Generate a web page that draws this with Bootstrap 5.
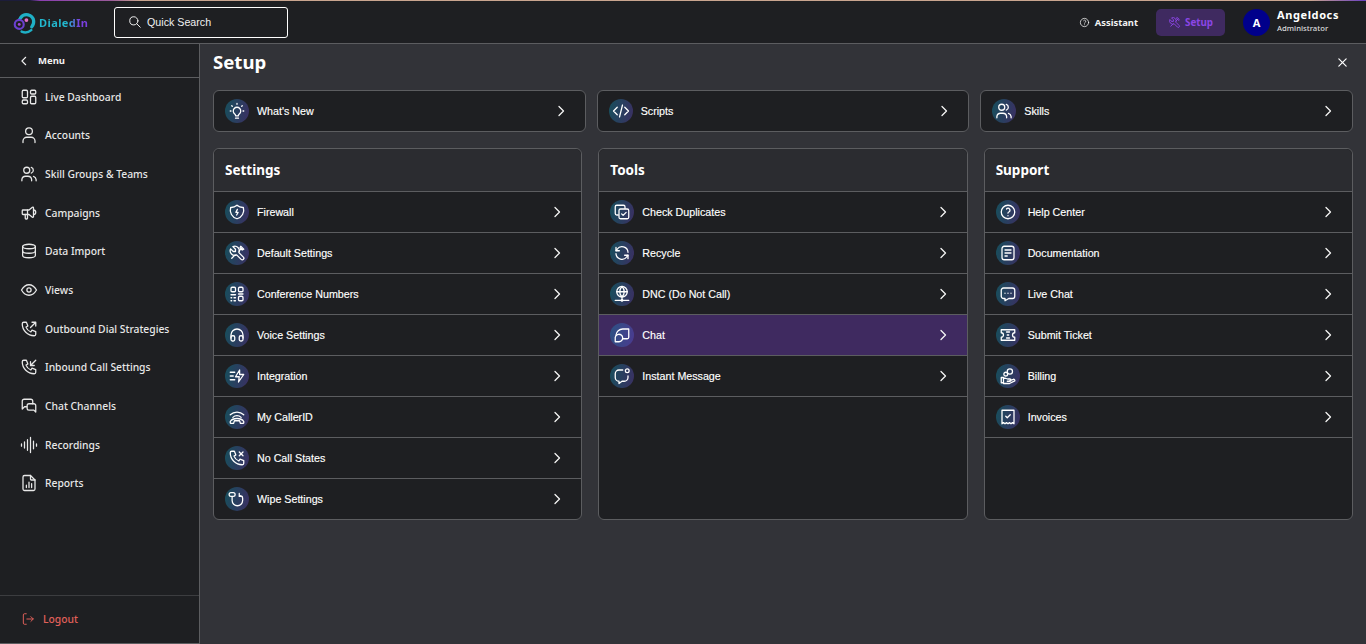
<!DOCTYPE html>
<html lang="en">
<head>
    <meta charset="UTF-8">
    <meta name="viewport" content="width=device-width, initial-scale=1.0">
    <title>DialedIn - Setup</title>
    <link href="https://cdn.jsdelivr.net/npm/bootstrap@5.3.0/dist/css/bootstrap.min.css" rel="stylesheet">
    <style>
        html, body { height: 100%; }
        body {
            background: #323338;
            color: #fff;
            font-family: "Liberation Sans", Arial, sans-serif;
            font-size: 10.7px;
            overflow: hidden;
        }
        svg.ic { fill: none; stroke: currentColor; stroke-width: 1.7; stroke-linecap: round; stroke-linejoin: round; flex: none; }
        svg.ic.di-thin { stroke-width: 1.3; }
        .di-shell { height: 100vh; }
        .di-topbar {
            height: 44px;
            flex: none;
            background: #1e1f22;
            border-bottom: 1px solid #5c5d60;
            position: relative;
            padding: 1px 0 0 13px;
        }
        .di-topbar::before {
            content: "";
            position: absolute;
            left: 0; right: 0; top: 0;
            height: 1px;
            background: linear-gradient(90deg, #1c1c3a 0, #1c1c3a 30px, #8a3fb0 40px, #9a5a9a 110px, #c9a58f 140px, #c9a58f 1310px, #6a3fc0 1366px);
        }
        .di-logo { width: 101px; gap: 3px; }
        .di-logo-text {
            font: 700 11px "Noto Sans", sans-serif;
            letter-spacing: .4px;
            background: linear-gradient(90deg, #22b8cf 0, #22b8cf 58%, #7b3fe0 82%);
            -webkit-background-clip: text;
            background-clip: text;
            color: transparent;
        }
        .di-search {
            width: 174px;
            height: 31px;
            border: 1px solid #fff;
            border-radius: 3px;
            padding-left: 13px;
            gap: 5px;
            color: #f0f0f0;
        }
        .di-assist { font: 700 9.4px "Noto Sans", sans-serif; gap: 5px; margin-right: 18px; color: #f2f2f2; }
        .di-setup-btn {
            width: 69px;
            height: 27px;
            background: #3f2a60;
            border-radius: 5px;
            color: #8b46e6;
            font: 700 9.8px "Noto Sans", sans-serif;
            gap: 4px;
            margin-right: 18px;
        }
        .di-avatar {
            width: 27px; height: 27px;
            border-radius: 50%;
            background: #00008b;
            font: 700 11px "Noto Sans", sans-serif;
        }
        .di-user { margin: -4px 27px 0 7px; line-height: 1; }
        .di-user-name { font: 700 11px "Noto Sans", sans-serif; letter-spacing: .6px; margin-bottom: 1px; }
        .di-user-role { font: 500 7.7px "Noto Sans", sans-serif; color: #dcdcdc; }
        .di-side {
            width: 200px;
            flex: none;
            background: #1e1f22;
            border-right: 1px solid #5c5d60;
            border-bottom: 1px solid #5c5d60;
        }
        .di-menu-head {
            height: 34px;
            border-bottom: 1px solid #5c5d60;
            padding-left: 19px;
            gap: 9px;
            font: 700 9.5px "Noto Sans", sans-serif;
            color: #f2f2f2;
        }
        .di-nav-link {
            height: 38.65px;
            padding: 0 0 1px 20px;
            gap: 7px;
            color: #e8e8e8;
            font: 500 10.3px "Noto Sans", sans-serif;
            text-decoration: none;
        }
        .di-logout {
            height: 48px;
            border-top: 1px solid #3c3d40;
            padding: 0 0 2px 21px;
            gap: 8px;
            color: #e0605a;
            font: 500 10.3px "Noto Sans", sans-serif;
        }
        .di-main { padding: 8px 13px 0 13px; min-width: 0; }
        .di-title { font: 700 18.6px/1 "Noto Sans", sans-serif; margin: 0; }
        .di-title-row { height: 20px; margin-bottom: 18px; }
        .di-close { color: #fff; margin-right: 5px; }
        .di-quick { display: grid; grid-template-columns: repeat(3, 1fr); gap: 11px; margin-bottom: 16px; }
        .di-panels { display: grid; grid-template-columns: repeat(3, 1fr); gap: 16px; }
        .di-card {
            background: #1e1f22;
            border: 1px solid #5c5d60;
            border-radius: 6px;
            color: #fff;
            overflow: hidden;
        }
        .di-card .card-header {
            height: 43px;
            background: #2b2c30;
            border-bottom: 1px solid #5c5d60;
            border-radius: 6px 6px 0 0;
            font: 700 13.5px "Noto Sans", sans-serif;
            padding: 0 11px;
            display: flex;
            align-items: center;
        }
        .di-list { height: 327px; background: transparent; }
        .di-row {
            height: 41px;
            background: transparent;
            color: #fff;
            border: 0;
            border-bottom: 1px solid #5c5d60;
            padding: 0 18px 0 11px;
            gap: 8px;
            display: flex;
            align-items: center;
            font-size: 10.7px;
            text-decoration: none;
            -webkit-text-stroke: .15px #fff;
        }
        .di-list .di-row { border-radius: 0; }
        .di-list .di-row:last-child { height: 40px; border-bottom: 0; }
        .di-list .di-row.di-fill { height: 41px; border-bottom: 1px solid #5c5d60; }
        .di-list .di-row.active { margin-top: 0; border-top-width: 0; background: #3f2a60; color: #fff; border-color: #5c5d60; }
        .di-quick .di-row { height: 40px; border: 0; background: transparent; }
        .di-bubble {
            width: 24px; height: 24px;
            border-radius: 50%;
            background: linear-gradient(100deg, #174f5c, #3b2f63);
            display: flex;
            align-items: center;
            justify-content: center;
            flex: none;
            color: #fff;
        }
        .active .di-bubble { background: linear-gradient(100deg, #2c5282, #4b3a90); }
        .di-chev { margin-left: auto; color: #f4f4f4; }
    </style>
</head>
<body>
<svg width="0" height="0" class="position-absolute">
    <symbol id="i-chev" viewBox="0 0 12 12"><path d="M4 1.5 8.5 6 4 10.5"/></symbol>
    <symbol id="i-back" viewBox="0 0 12 12"><path d="M8 1.5 3.5 6 8 10.5"/></symbol>
    <symbol id="i-search" viewBox="0 0 24 24"><circle cx="10" cy="10" r="7"/><path d="m21 21-6-6"/></symbol>
    <symbol id="i-help" viewBox="0 0 24 24"><circle cx="12" cy="12" r="9"/><path d="M12 17v.01M12 13.500a1.500 1.500 0 0 1 1-1.500 2.600 2.600 0 1 0-3-4"/></symbol>
    <symbol id="i-tools" viewBox="0 0 24 24"><path d="M7 10h3V7L6.500 3.500a6 6 0 0 1 8 8l6 6a2 2 0 0 1-3 3l-6-6a6 6 0 0 1-8-8L7 10"/><path d="M14.500 9.500 19 5M17 3l4 4-2 1-3-3zM9.500 14.500 5 19a1.400 1.400 0 0 0 0 0"/></symbol>
    <symbol id="i-dash" viewBox="0 0 24 24"><rect x="3" y="3" width="7" height="10" rx="1.500"/><rect x="14" y="3" width="7" height="5" rx="1.500"/><rect x="3" y="16" width="7" height="5" rx="1.500"/><rect x="14" y="11" width="7" height="10" rx="1.500"/></symbol>
    <symbol id="i-user" viewBox="0 0 24 24"><circle cx="12" cy="7" r="4.500"/><path d="M4 22v-2a5 5 0 0 1 5-5h6a5 5 0 0 1 5 5v2"/></symbol>
    <symbol id="i-users" viewBox="0 0 24 24"><circle cx="9" cy="7" r="4"/><path d="M2.500 21v-1.500a5 5 0 0 1 5-4.500h3a5 5 0 0 1 5 4.500V21"/><path d="M15 3.200a4 4 0 0 1 0 7.600M18 15.200a5 5 0 0 1 3.500 4.300V21"/></symbol>
    <symbol id="i-camp" viewBox="0 0 24 24"><path d="M18 8a3 3 0 0 1 0 6M10 8v11a1 1 0 0 1-1 1H8a1 1 0 0 1-1-1v-5"/><path d="M12 8 16.500 4.300A1 1 0 0 1 18 5v12a1 1 0 0 1-1.500.700L12 14H4a1 1 0 0 1-1-1V9a1 1 0 0 1 1-1h8"/></symbol>
    <symbol id="i-db" viewBox="0 0 24 24"><ellipse cx="12" cy="6" rx="8.500" ry="3"/><path d="M3.500 6v12c0 1.700 3.800 3 8.500 3s8.500-1.300 8.500-3V6"/><path d="M3.500 12c0 1.700 3.800 3 8.500 3s8.500-1.300 8.500-3"/></symbol>
    <symbol id="i-eye" viewBox="0 0 24 24"><circle cx="12" cy="12" r="2.800"/><path d="M22 12c-2.700 4.700-6 7-10 7s-7.300-2.300-10-7c2.700-4.700 6-7 10-7s7.300 2.300 10 7"/></symbol>
    <symbol id="i-out" viewBox="0 0 24 24"><path d="M5 3h3.500l2 5-2.500 1.500a11 11 0 0 0 6.500 6.500l1.500-2.500 5 2v3.500a2 2 0 0 1-2 2A16 16 0 0 1 3 5a2 2 0 0 1 2-2"/><path d="M14 10l7-7M16 3h5v5"/></symbol>
    <symbol id="i-in" viewBox="0 0 24 24"><path d="M5 3h3.500l2 5-2.500 1.500a11 11 0 0 0 6.500 6.500l1.500-2.500 5 2v3.500a2 2 0 0 1-2 2A16 16 0 0 1 3 5a2 2 0 0 1 2-2"/><path d="M21 3l-7 7M14 5v5h5"/></symbol>
    <symbol id="i-chats" viewBox="0 0 24 24"><path d="M17 9V5.500A2.500 2.500 0 0 0 14.500 3h-9A2.500 2.500 0 0 0 3 5.500V16l3-3h3"/><path d="M21 20l-2.500-2.500H12A2.500 2.500 0 0 1 9.500 15v-3.500A2.500 2.500 0 0 1 12 9h6.500a2.500 2.500 0 0 1 2.500 2.500z"/></symbol>
    <symbol id="i-wave" viewBox="0 0 24 24"><path d="M2 10.500v3M6 8v8M10 5v14M14 2v20M18 7v10M22 10.500v3"/></symbol>
    <symbol id="i-report" viewBox="0 0 24 24"><path d="M14 2v5a1 1 0 0 0 1 1h5"/><path d="M6 22a2 2 0 0 1-2-2V4a2 2 0 0 1 2-2h8l6 6v12a2 2 0 0 1-2 2z"/><path d="M8.500 18v-3M12 18v-7M15.500 18v-5"/></symbol>
    <symbol id="i-logout" viewBox="0 0 24 24"><path d="M9 3H6a2 2 0 0 0-2 2v14a2 2 0 0 0 2 2h3M10 12h11M17 8l4 4-4 4"/></symbol>
    <symbol id="i-x" viewBox="0 0 12 12"><path d="M2 2l8 8M10 2l-8 8"/></symbol>
    <symbol id="i-bulb" viewBox="0 0 24 24"><path d="M3 12h1M12 2v1M5 5l.7.7M19 5l-.7.7M21 12h-1"/><path d="M9 16a5 5 0 1 1 6 0c-.8.700-1.200 1.500-1.300 2.500h-3.400c-.1-1-.5-1.800-1.300-2.500M10 21.500h4"/></symbol>
    <symbol id="i-code" viewBox="0 0 24 24"><path d="M7 7l-5 5 5 5M17 7l5 5-5 5M14 4l-4 16"/></symbol>
    <symbol id="i-shield" viewBox="0 0 24 24"><path d="M12 3a12 12 0 0 0 8.500 3A12 12 0 0 1 12 21 12 12 0 0 1 3.500 6 12 12 0 0 0 12 3"/><path d="M12.500 8.500 10.500 12.500h3l-2 3.500"/></symbol>
    <symbol id="i-qr" viewBox="0 0 24 24"><rect x="4" y="3" width="6" height="6" rx="1.500"/><rect x="14" y="3" width="6" height="6" rx="1.500"/><rect x="14" y="15" width="6" height="6" rx="1.500"/><path d="M4 13h6M4 17h1M8 17h2M4 21h1M8 21h2M14 12h6"/></symbol>
    <symbol id="i-head" viewBox="0 0 24 24"><rect x="4" y="13" width="5" height="7" rx="2"/><rect x="15" y="13" width="5" height="7" rx="2"/><path d="M4 16v-4a8 8 0 0 1 16 0v4"/></symbol>
    <symbol id="i-integ" viewBox="0 0 24 24"><path d="M3 7h6M3 12h4M3 17h6"/><path d="M15.500 4 10 13h5l-1 7 7-10h-5.500z"/></symbol>
    <symbol id="i-caller" viewBox="0 0 24 24"><path d="M3 9a13 13 0 0 1 18 0M6.500 12.500a8 8 0 0 1 11 0"/><path d="M3 19.500v-1.500c2-3 5.500-4 9-4s7 1 9 4v1.500a1 1 0 0 1-1 1h-3.500l-1-3.500h-7l-1 3.500H4a1 1 0 0 1-1-1"/></symbol>
    <symbol id="i-phonex" viewBox="0 0 24 24"><path d="M5 3h3.500l2 5-2.500 1.500a11 11 0 0 0 6.500 6.500l1.500-2.500 5 2v3.500a2 2 0 0 1-2 2A16 16 0 0 1 3 5a2 2 0 0 1 2-2"/><path d="M15 4l5 5M20 4l-5 5"/></symbol>
    <symbol id="i-wipe" viewBox="0 0 24 24"><path d="M4 3.500a2.500 2.500 0 0 0 0 5h3a2.500 2.500 0 0 0 0-5zM5.500 8.500V14a7 7 0 0 0 14 0v-3a3.500 3.500 0 0 0-4-3.500M15 4.500v4h4"/></symbol>
    <symbol id="i-dup" viewBox="0 0 24 24"><path d="M16 7V5a2 2 0 0 0-2-2H5a2 2 0 0 0-2 2v9a2 2 0 0 0 2 2h2"/><rect x="8" y="8" width="13" height="13" rx="2"/><path d="M11.500 14.500l2 2 4-4"/></symbol>
    <symbol id="i-recycle" viewBox="0 0 24 24"><path d="M20 11A8 8 0 0 0 5.500 7L4 9M4 13a8 8 0 0 0 14.500 4l1.500-2"/><path d="M4 4.500V9h4.500M20 19.500V15h-4.500"/></symbol>
    <symbol id="i-dnc" viewBox="0 0 24 24"><circle cx="12" cy="9" r="7"/><path d="M5 9h14M12 2c-4 4-4 10 0 14M12 2c4 4 4 10 0 14M12 16v4M3 20.500h18"/><circle cx="12" cy="20.500" r="1"/></symbol>
    <symbol id="i-chat" viewBox="0 0 24 24"><path d="M21 4H13a9 9 0 0 0-9 8M21 4v11a2 2 0 0 1-2 2h-6"/><path d="M3 21v-4a5 5 0 1 1 5 4z"/></symbol>
    <symbol id="i-im" viewBox="0 0 24 24"><path d="M13 4H8a5 5 0 0 0-5 5v5a5 5 0 0 0 5 5v3l4-3h3a5 5 0 0 0 5-5v-2"/><circle cx="19" cy="5" r="2.500"/></symbol>
    <symbol id="i-doc" viewBox="0 0 24 24"><rect x="4" y="3" width="16" height="18" rx="3"/><path d="M8 8h8M8 12h8M8 16h3"/></symbol>
    <symbol id="i-live" viewBox="0 0 24 24"><path d="M3 7a3 3 0 0 1 3-3h12a3 3 0 0 1 3 3v8a3 3 0 0 1-3 3h-5l-5 3v-3H6a3 3 0 0 1-3-3z"/><path d="M8 11h.01M12 11h.01M16 11h.01"/></symbol>
    <symbol id="i-ticket" viewBox="0 0 24 24"><path d="M3 5h18v4a3 3 0 0 0 0 6v4H3v-4a3 3 0 0 0 0-6z"/><path d="M14 8h-4M14 16h-4M13 12h-2"/></symbol>
    <symbol id="i-bill" viewBox="0 0 24 24"><circle cx="14.500" cy="6" r="3.500"/><circle cx="9" cy="9.500" r="2.500"/><path d="M3 14h3v7H3zM6 15h2.500l3 1h3a1.500 1.500 0 0 1 0 3H11M14 18.500l5-2a1.500 1.500 0 0 1 2 2L14 22H6"/></symbol>
    <symbol id="i-inv" viewBox="0 0 24 24"><path d="M4 3h16v18l-2-1.500-2 1.500-2-1.500-2 1.500-2-1.500-2 1.500-2-1.500L4 21z"/><path d="M9 11l2 2 4-4"/></symbol>
</svg>

<div class="di-shell d-flex flex-column">
    <header class="di-topbar d-flex align-items-center">
        <div class="di-logo d-flex align-items-center">
            <svg width="23" height="23" viewBox="0 0 24 24" fill="none">
                <path d="M8 7a7.500 7.500 0 0 1 13.500 3c.5 3-.5 5-2 6.500" stroke="#1fb0c6" stroke-width="3.400" stroke-linecap="round"/>
                <path d="M8 7c-1 1-1.500 2-1.500 2" stroke="#1fb0c6" stroke-width="3"/>
                <circle cx="6.500" cy="14" r="4.700" stroke="#6a3fd0" stroke-width="2.200"/>
                <circle cx="6.500" cy="14" r="1.500" fill="#a04ad8"/>
                <circle cx="14" cy="9.500" r="2" fill="#e070c8"/>
                <path d="M9 21.500c3 1.200 7 1 10-1.500" stroke="#1fb0c6" stroke-width="2.600" stroke-linecap="round"/>
            </svg>
            <span class="di-logo-text">DialedIn</span>
        </div>
        <div class="di-search d-flex align-items-center">
            <svg class="ic" width="14" height="14"><use href="#i-search"/></svg>
            <span>Quick Search</span>
        </div>
        <div class="ms-auto d-flex align-items-center">
            <div class="di-assist d-flex align-items-center">
                <svg class="ic" width="11" height="11"><use href="#i-help"/></svg>
                <span>Assistant</span>
            </div>
            <div class="di-setup-btn d-flex align-items-center justify-content-center">
                <svg class="ic" width="13" height="13"><use href="#i-tools"/></svg>
                <span>Setup</span>
            </div>
            <div class="di-avatar d-flex align-items-center justify-content-center">A</div>
            <div class="di-user">
                <div class="di-user-name">Angeldocs</div>
                <div class="di-user-role">Administrator</div>
            </div>
        </div>
    </header>

    <div class="d-flex flex-grow-1" style="min-height:0">
        <aside class="di-side d-flex flex-column">
            <div class="di-menu-head d-flex align-items-center">
                <svg class="ic di-thin" width="10" height="10"><use href="#i-back"/></svg>
                <span>Menu</span>
            </div>
            <nav class="flex-grow-1 d-flex flex-column">
                <a class="di-nav-link d-flex align-items-center" href="#"><svg class="ic" width="18" height="18"><use href="#i-dash"/></svg><span>Live Dashboard</span></a>
                <a class="di-nav-link d-flex align-items-center" href="#"><svg class="ic" width="18" height="18"><use href="#i-user"/></svg><span>Accounts</span></a>
                <a class="di-nav-link d-flex align-items-center" href="#"><svg class="ic" width="18" height="18"><use href="#i-users"/></svg><span>Skill Groups &amp; Teams</span></a>
                <a class="di-nav-link d-flex align-items-center" href="#"><svg class="ic" width="18" height="18"><use href="#i-camp"/></svg><span>Campaigns</span></a>
                <a class="di-nav-link d-flex align-items-center" href="#"><svg class="ic" width="18" height="18"><use href="#i-db"/></svg><span>Data Import</span></a>
                <a class="di-nav-link d-flex align-items-center" href="#"><svg class="ic" width="18" height="18"><use href="#i-eye"/></svg><span>Views</span></a>
                <a class="di-nav-link d-flex align-items-center" href="#"><svg class="ic" width="18" height="18"><use href="#i-out"/></svg><span>Outbound Dial Strategies</span></a>
                <a class="di-nav-link d-flex align-items-center" href="#"><svg class="ic" width="18" height="18"><use href="#i-in"/></svg><span>Inbound Call Settings</span></a>
                <a class="di-nav-link d-flex align-items-center" href="#"><svg class="ic" width="18" height="18"><use href="#i-chats"/></svg><span>Chat Channels</span></a>
                <a class="di-nav-link d-flex align-items-center" href="#"><svg class="ic" width="18" height="18"><use href="#i-wave"/></svg><span>Recordings</span></a>
                <a class="di-nav-link d-flex align-items-center" href="#"><svg class="ic" width="18" height="18"><use href="#i-report"/></svg><span>Reports</span></a>
            </nav>
            <div class="di-logout d-flex align-items-center">
                <svg class="ic" width="14" height="14"><use href="#i-logout"/></svg>
                <span>Logout</span>
            </div>
        </aside>

        <main class="di-main flex-grow-1">
            <div class="di-title-row d-flex align-items-center justify-content-between">
                <h1 class="di-title">Setup</h1>
                <svg class="ic di-thin di-close" width="11" height="11"><use href="#i-x"/></svg>
            </div>

            <div class="di-quick">
                <div class="card di-card"><a href="#" class="di-row"><span class="di-bubble"><svg class="ic" width="18" height="18"><use href="#i-bulb"/></svg></span>What's New<svg class="ic di-thin di-chev" width="12" height="12"><use href="#i-chev"/></svg></a></div>
                <div class="card di-card"><a href="#" class="di-row"><span class="di-bubble"><svg class="ic" width="18" height="18"><use href="#i-code"/></svg></span>Scripts<svg class="ic di-thin di-chev" width="12" height="12"><use href="#i-chev"/></svg></a></div>
                <div class="card di-card"><a href="#" class="di-row"><span class="di-bubble"><svg class="ic" width="18" height="18"><use href="#i-users"/></svg></span>Skills<svg class="ic di-thin di-chev" width="12" height="12"><use href="#i-chev"/></svg></a></div>
            </div>

            <div class="di-panels">
                <div class="card di-card">
                    <div class="card-header">Settings</div>
                    <div class="list-group list-group-flush di-list">
                        <a href="#" class="list-group-item di-row"><span class="di-bubble"><svg class="ic" width="18" height="18"><use href="#i-shield"/></svg></span>Firewall<svg class="ic di-thin di-chev" width="12" height="12"><use href="#i-chev"/></svg></a>
                        <a href="#" class="list-group-item di-row"><span class="di-bubble"><svg class="ic" width="18" height="18"><use href="#i-tools"/></svg></span>Default Settings<svg class="ic di-thin di-chev" width="12" height="12"><use href="#i-chev"/></svg></a>
                        <a href="#" class="list-group-item di-row"><span class="di-bubble"><svg class="ic" width="18" height="18"><use href="#i-qr"/></svg></span>Conference Numbers<svg class="ic di-thin di-chev" width="12" height="12"><use href="#i-chev"/></svg></a>
                        <a href="#" class="list-group-item di-row"><span class="di-bubble"><svg class="ic" width="18" height="18"><use href="#i-head"/></svg></span>Voice Settings<svg class="ic di-thin di-chev" width="12" height="12"><use href="#i-chev"/></svg></a>
                        <a href="#" class="list-group-item di-row"><span class="di-bubble"><svg class="ic" width="18" height="18"><use href="#i-integ"/></svg></span>Integration<svg class="ic di-thin di-chev" width="12" height="12"><use href="#i-chev"/></svg></a>
                        <a href="#" class="list-group-item di-row"><span class="di-bubble"><svg class="ic" width="18" height="18"><use href="#i-caller"/></svg></span>My CallerID<svg class="ic di-thin di-chev" width="12" height="12"><use href="#i-chev"/></svg></a>
                        <a href="#" class="list-group-item di-row"><span class="di-bubble"><svg class="ic" width="18" height="18"><use href="#i-phonex"/></svg></span>No Call States<svg class="ic di-thin di-chev" width="12" height="12"><use href="#i-chev"/></svg></a>
                        <a href="#" class="list-group-item di-row"><span class="di-bubble"><svg class="ic" width="18" height="18"><use href="#i-wipe"/></svg></span>Wipe Settings<svg class="ic di-thin di-chev" width="12" height="12"><use href="#i-chev"/></svg></a>
                    </div>
                </div>
                <div class="card di-card">
                    <div class="card-header">Tools</div>
                    <div class="list-group list-group-flush di-list">
                        <a href="#" class="list-group-item di-row"><span class="di-bubble"><svg class="ic" width="18" height="18"><use href="#i-dup"/></svg></span>Check Duplicates<svg class="ic di-thin di-chev" width="12" height="12"><use href="#i-chev"/></svg></a>
                        <a href="#" class="list-group-item di-row"><span class="di-bubble"><svg class="ic" width="18" height="18"><use href="#i-recycle"/></svg></span>Recycle<svg class="ic di-thin di-chev" width="12" height="12"><use href="#i-chev"/></svg></a>
                        <a href="#" class="list-group-item di-row"><span class="di-bubble"><svg class="ic" width="18" height="18"><use href="#i-dnc"/></svg></span>DNC (Do Not Call)<svg class="ic di-thin di-chev" width="12" height="12"><use href="#i-chev"/></svg></a>
                        <a href="#" class="list-group-item di-row active"><span class="di-bubble"><svg class="ic" width="18" height="18"><use href="#i-chat"/></svg></span>Chat<svg class="ic di-thin di-chev" width="12" height="12"><use href="#i-chev"/></svg></a>
                        <a href="#" class="list-group-item di-row di-fill"><span class="di-bubble"><svg class="ic" width="18" height="18"><use href="#i-im"/></svg></span>Instant Message<svg class="ic di-thin di-chev" width="12" height="12"><use href="#i-chev"/></svg></a>
                    </div>
                </div>
                <div class="card di-card">
                    <div class="card-header">Support</div>
                    <div class="list-group list-group-flush di-list">
                        <a href="#" class="list-group-item di-row"><span class="di-bubble"><svg class="ic" width="18" height="18"><use href="#i-help"/></svg></span>Help Center<svg class="ic di-thin di-chev" width="12" height="12"><use href="#i-chev"/></svg></a>
                        <a href="#" class="list-group-item di-row"><span class="di-bubble"><svg class="ic" width="18" height="18"><use href="#i-doc"/></svg></span>Documentation<svg class="ic di-thin di-chev" width="12" height="12"><use href="#i-chev"/></svg></a>
                        <a href="#" class="list-group-item di-row"><span class="di-bubble"><svg class="ic" width="18" height="18"><use href="#i-live"/></svg></span>Live Chat<svg class="ic di-thin di-chev" width="12" height="12"><use href="#i-chev"/></svg></a>
                        <a href="#" class="list-group-item di-row"><span class="di-bubble"><svg class="ic" width="18" height="18"><use href="#i-ticket"/></svg></span>Submit Ticket<svg class="ic di-thin di-chev" width="12" height="12"><use href="#i-chev"/></svg></a>
                        <a href="#" class="list-group-item di-row"><span class="di-bubble"><svg class="ic" width="18" height="18"><use href="#i-bill"/></svg></span>Billing<svg class="ic di-thin di-chev" width="12" height="12"><use href="#i-chev"/></svg></a>
                        <a href="#" class="list-group-item di-row di-fill"><span class="di-bubble"><svg class="ic" width="18" height="18"><use href="#i-inv"/></svg></span>Invoices<svg class="ic di-thin di-chev" width="12" height="12"><use href="#i-chev"/></svg></a>
                    </div>
                </div>
            </div>
        </main>
    </div>
</div>
<script src="https://cdn.jsdelivr.net/npm/bootstrap@5.3.0/dist/js/bootstrap.bundle.min.js"></script>
</body>
</html>
